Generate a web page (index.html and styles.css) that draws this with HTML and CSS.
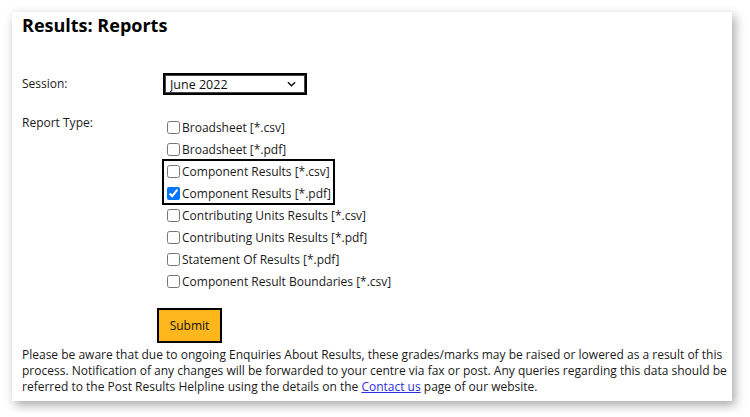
FILE: index.html
```html
<!DOCTYPE html>
<html>
<head>
<meta charset="utf-8">
<link rel="stylesheet" href="styles.css">
</head>
<body>
<div class="card">
  <h1 class="title">Results: Reports</h1>
  <div class="form">
    <label class="label label-session" for="session">Session:</label>
    <div class="control">
      <select id="session" class="select">
        <option>June 2022</option>
      </select>
    </div>
    <div class="label label-type">Report Type:</div>
    <div class="list">
      <label class="row"><input type="checkbox">Broadsheet [*.csv]</label>
      <label class="row"><input type="checkbox">Broadsheet [*.pdf]</label>
      <div class="group">
        <label class="row"><input type="checkbox">Component Results [*.csv]</label>
        <label class="row"><input type="checkbox" checked>Component Results [*.pdf]</label>
      </div>
      <label class="row"><input type="checkbox">Contributing Units Results [*.csv]</label>
      <label class="row"><input type="checkbox">Contributing Units Results [*.pdf]</label>
      <label class="row"><input type="checkbox">Statement Of Results [*.pdf]</label>
      <label class="row"><input type="checkbox">Component Result Boundaries [*.csv]</label>
    </div>
  </div>
  <div class="actions">
    <button class="submit">Submit</button>
  </div>
  <p class="note">Please be aware that due to ongoing Enquiries About Results, these grades/marks may be raised or lowered as a result of this process. Notification of any changes will be forwarded to your centre via fax or post. Any queries regarding this data should be referred to the Post Results Helpline using the details on the <a href="#">Contact us</a> page of our website.</p>
</div>
</body>
</html>
```

FILE: styles.css
```css
html, body {
  margin: 0;
  padding: 0;
  background: #ffffff;
}
body {
  padding: 12px;
  font-family: "Open Sans", "Liberation Sans", sans-serif;
  font-size: 12px;
  color: #1a1a1a;
}
.card {
  width: 720px;
  box-sizing: border-box;
  background: #ffffff;
  padding: 1px 4px 6px 10px;
  box-shadow: 3px 4px 10px rgba(0, 0, 0, 0.35);
}
.title {
  margin: 0;
  font-size: 18px;
  line-height: 24px;
  font-weight: 700;
  color: #000;
}
.form {
  display: grid;
  grid-template-columns: 141px auto;
  margin-top: 36px;
  row-gap: 21px;
}
.label {
  line-height: 18px;
}
.label-session {
  align-self: center;
}
.label-type {
  line-height: 14px;
}
.select {
  -webkit-appearance: none;
  appearance: none;
  width: 144px;
  height: 22px;
  box-sizing: border-box;
  border: 2px solid #000;
  box-shadow: inset 0 0 0 1px #444;
  border-radius: 0;
  background-color: #fff;
  background-image: url("data:image/svg+xml,%3Csvg xmlns='http://www.w3.org/2000/svg' width='10' height='6' viewBox='0 0 10 6'%3E%3Cpath d='M1 1l4 4 4-4' fill='none' stroke='%23111' stroke-width='1.6'/%3E%3C/svg%3E");
  background-repeat: no-repeat;
  background-position: right 9px center;
  background-size: 9px 6px;
  font-family: "Open Sans", "Liberation Sans", sans-serif;
  font-size: 12.5px;
  color: #111;
  padding: 0 0 0 5px;
  margin: 0;
  display: block;
}
.list {
  display: flex;
  flex-direction: column;
  align-items: flex-start;
}
.row {
  display: flex;
  align-items: center;
  height: 22px;
  white-space: nowrap;
}
.row input {
  margin: 0 2px 0 4px;
  width: 13px;
  height: 13px;
}
.group {
  display: flex;
  flex-direction: column;
  padding-right: 3px;
  outline: 2px solid #000;
  outline-offset: -1px;
}
.actions {
  margin-top: 16px;
  padding-left: 135px;
}
.submit {
  width: 65px;
  height: 35px;
  box-sizing: border-box;
  border: 2px solid #000;
  background: #fdb71c;
  font-family: "Open Sans", "Liberation Sans", sans-serif;
  font-size: 12px;
  color: #111;
  padding: 0;
  margin: 0;
  display: block;
}
.note {
  margin: 4px 0 0 0;
  line-height: 16px;
}
.note a {
  color: #2c2ce0;
}
```
